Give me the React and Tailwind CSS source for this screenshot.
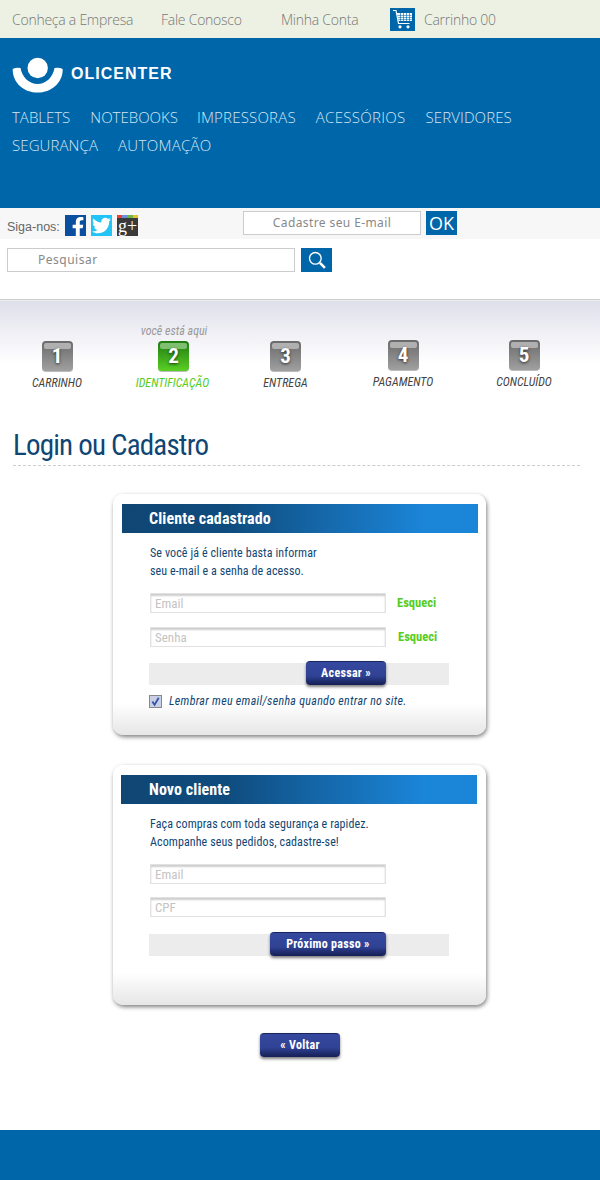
import React from 'react';
import { FaFacebookF, FaTwitter } from 'react-icons/fa';

const cond = "font-['Roboto',sans-serif] [font-stretch:75%]";
const light = "font-['Open_Sans',sans-serif] font-light";

const CartIcon = () => (
    <svg viewBox="0 0 25 23" className="w-[25px] h-[23px]" fill="none">
        <path d="M3 2.5h3l2.5 13h11" stroke="#fff" strokeWidth="1.2" />
        <path d="M6.8 5h15.2v8H8.3z" fill="#fff" />
        <path d="M7.5 7.4h14M8 9.6h14M8.3 11.6h13.5M10.5 5v8M13.5 5v8M16.5 5v8M19.5 5v8" stroke="#0066aa" strokeWidth="0.6" />
        <circle cx="10" cy="18.8" r="1.6" fill="#fff" />
        <circle cx="18" cy="18.8" r="1.6" fill="#fff" />
    </svg>
);

const Logo = () => (
    <svg viewBox="0 0 52 37" className="w-[52px] h-[37px]" fill="#fff">
        <circle cx="25.7" cy="11" r="10.2" />
        <path d="M0.7 12 Q4 10 8.5 11 C10 20 17 27 25.7 27 C34 27 41 20 42.5 11 Q47 10 50.7 12 C51 26 39 35.6 25.7 35.6 C12 35.6 0.5 26 0.7 12 Z" />
    </svg>
);

const Step = ({ n, label, active, here, high }) => (
    <div className={`relative flex flex-col items-center ${high ? '-mt-px' : ''}`}>
        {here && (
            <span className={`absolute -top-[18px] ml-[1px] whitespace-nowrap italic text-[12px] leading-[16px] text-[#999] ${cond}`}>{here}</span>
        )}
        <div className={`relative w-[31px] h-[31px] rounded-[4px] flex items-center justify-center border-b border-[#bbb] ${active ? 'bg-gradient-to-b from-[#1f7a12] to-[#5ad024]' : 'bg-gradient-to-b from-[#6a6a6a] to-[#a0a0a0]'}`}>
            <div className={`absolute top-[2px] left-[2px] right-[2px] h-[6px] rounded-[2px] ${active ? 'bg-[#7fbf70]' : 'bg-[#b0b0b0]'}`}></div>
            <span className={`relative text-white font-bold text-[21px] leading-none [text-shadow:0_1px_3px_rgba(0,0,0,0.7)] ${cond}`}>{n}</span>
        </div>
        <span className={`mt-[3px] italic text-[12px] leading-[16px] whitespace-nowrap ${active ? 'text-[#55cc22] -ml-[2px]' : 'text-[#444]'} ${cond}`}>{label}</span>
    </div>
);

const Field = ({ placeholder }) => (
    <input
        placeholder={placeholder}
        className={`w-[236px] h-[20px] box-border border border-[#e2e2e2] shadow-[inset_0_2px_2px_rgba(0,0,0,0.2)] px-[4px] text-[13px] bg-white outline-none placeholder:text-[#c4c4c4] ${cond}`}
    />
);

const Btn = ({ children, className = '' }) => (
    <button className={`h-[24px] pb-[2px] rounded-[4px] bg-gradient-to-b from-[#35499f] via-[#2f4294] via-60% to-[#161f55] text-white font-bold text-[12px] tracking-[0.3px] shadow-[0_2px_3px_rgba(0,0,0,0.5)] border-t border-[#1a2560] ${cond} ${className}`}>
        {children}
    </button>
);

const CardTitle = ({ children, className = '' }) => (
    <div className={`h-[29px] w-[356px] flex items-center bg-[linear-gradient(to_right,#0f4674_0,#0f4c7e_30%,#1b85d8_85%)] text-white font-bold text-[16px] tracking-[0.1px] ${cond} ${className}`}>
        {children}
    </div>
);

const cardClass = "ml-[113px] w-[373px] rounded-[10px] shadow-[1px_2px_4px_rgba(0,0,0,0.5)] bg-[linear-gradient(to_bottom,#fff_0,#fff_calc(100%-32px),#e6e6e6_100%)] pt-[10px]";
const bodyText = `ml-[1px] text-[#0f4674] text-[12px] leading-[18px] tracking-[0.1px] ${cond}`;

export default function App() {
    return (
        <div className="w-[600px] bg-white">
            {/* barra superior */}
            <div className={`h-[38px] bg-[#ecf1e3] flex items-center text-[14px] tracking-[-0.25px] text-[#777] ${light}`}>
                <span className="ml-[12px] w-[149px] whitespace-nowrap">Conheça a Empresa</span>
                <span className="w-[120px] whitespace-nowrap">Fale Conosco</span>
                <span className="w-[109px] whitespace-nowrap">Minha Conta</span>
                <span className="w-[25px] h-[23px] bg-[#0066aa] mr-[9px]"><CartIcon /></span>
                <span className="whitespace-nowrap">Carrinho 00</span>
            </div>

            {/* header */}
            <div className="h-[170px] bg-[#0066aa] pl-[12px] pt-[19px]">
                <div className="flex items-center gap-[7px]">
                    <Logo />
                    <span className="font-['Liberation_Sans',sans-serif] font-bold text-white text-[16px] tracking-[1px] -mt-[4px]">OLICENTER</span>
                </div>
                <div className={`mt-[9px] flex flex-wrap gap-x-[20px] w-[560px] text-[15px] leading-[28px] text-[#d5e6f3] ${light}`}>
                    <span>TABLETS</span>
                    <span>NOTEBOOKS</span>
                    <span className="-ml-px tracking-[0.2px]">IMPRESSORAS</span>
                    <span className="tracking-[0.3px]">ACESSÓRIOS</span>
                    <span className="tracking-[0.1px]">SERVIDORES</span>
                    <span className="tracking-[0.1px]">SEGURANÇA</span>
                    <span className="tracking-[0.3px]">AUTOMAÇÃO</span>
                </div>
            </div>

            {/* redes e newsletter */}
            <div className="h-[31px] bg-[#f7f7f7] flex items-start pl-[7px]">
                <span className="mt-[11px] font-['Liberation_Sans',sans-serif] text-[12.5px] leading-[16px] text-[#666] w-[58px]">Siga-nos:</span>
                <span className="mt-[7px] w-[21px] h-[21px] bg-[#0a4f9f] text-white flex items-end justify-center text-[20px] overflow-hidden"><FaFacebookF className="translate-x-[2px] translate-y-[1px]" /></span>
                <span className="mt-[7px] ml-[5px] w-[21px] h-[21px] bg-[#22c3f5] text-white flex items-center justify-center text-[19px]"><FaTwitter /></span>
                <span className="mt-[7px] ml-[5px] w-[21px] h-[21px] bg-[#3a3a3a] text-white flex flex-col">
                    <span className="flex h-[3px] shrink-0">
                        <span className="flex-1 bg-[#e8403a]"></span>
                        <span className="flex-1 bg-[#6f8fdc]"></span>
                        <span className="flex-1 bg-[#6cb842]"></span>
                        <span className="flex-1 bg-[#e6c02e]"></span>
                    </span>
                    <span className="font-['Liberation_Serif',serif] text-[18px] leading-[16px] text-center">g+</span>
                </span>
                <input
                    placeholder="Cadastre seu E-mail"
                    className="ml-[105px] mt-[3px] w-[178px] h-[24px] pb-[2px] box-border border border-[#ccc] bg-white text-center text-[12px] tracking-[0.4px] font-['Noto_Sans',sans-serif] outline-none placeholder:text-[#888]"
                />
                <span className="ml-[5px] mt-[3px] w-[31px] h-[24px] bg-[#0066aa] text-white text-[18px] leading-[24px] text-center font-['Open_Sans',sans-serif]">OK</span>
            </div>

            {/* busca */}
            <div className="h-[61px] bg-white pl-[7px] pt-[9px] flex items-start border-b border-[#ccc]">
                <input
                    placeholder="Pesquisar"
                    className="w-[288px] h-[24px] pb-[2px] box-border border border-[#ccc] pl-[30px] text-[12px] tracking-[0.5px] font-['Noto_Sans',sans-serif] outline-none placeholder:text-[#888]"
                />
                <span className="ml-[6px] w-[31px] h-[24px] bg-[#0066aa] flex items-center justify-center">
                    <svg viewBox="0 0 24 24" className="w-[20px] h-[20px]" fill="none" stroke="#fff">
                        <circle cx="10" cy="10" r="7" strokeWidth="1.6" />
                        <path d="M15.5 15.5l6 6" strokeWidth="3" />
                    </svg>
                </span>
            </div>

            {/* etapas */}
            <div className="border-t border-[#eee] h-[108px] pt-[40px] bg-[linear-gradient(to_bottom,#dfdfeb_0,#fff_62px)] grid grid-cols-[114px_119px_105px_130px_112px] items-start">
                <Step n="1" label="CARRINHO" />
                <Step n="2" label="IDENTIFICAÇÃO" active here="você está aqui" />
                <Step n="3" label="ENTREGA" />
                <Step n="4" label="PAGAMENTO" high />
                <Step n="5" label="CONCLUÍDO" high />
            </div>

            {/* titulo */}
            <div className="ml-[13px] w-[567px] mt-[12px] h-[46px] pt-[7px] border-b border-dashed border-[#ccc]">
                <h1 className={`text-[#0f4674] text-[29px] tracking-[-0.8px] leading-[36px] font-normal ${cond}`}>Login ou Cadastro</h1>
            </div>

            {/* cliente cadastrado */}
            <div className={`mt-[28px] h-[241px] ${cardClass}`}>
                <CardTitle className="ml-[9px] pl-[27px]">Cliente cadastrado</CardTitle>
                <div className="pl-[36px] pt-[3px]">
                    <p className={`mt-[8px] ${bodyText}`}>Se você já é cliente basta informar<br />seu e-mail e a senha de acesso.</p>
                    <div className="mt-[13px] pl-[1px] flex items-center gap-[11px]">
                        <Field placeholder="Email" />
                        <span className={`mt-[1px] text-[#55cc22] font-bold text-[12.5px] ${cond}`}>Esqueci</span>
                    </div>
                    <div className="mt-[14px] pl-[1px] flex items-center gap-[12px]">
                        <Field placeholder="Senha" />
                        <span className={`mt-[1px] text-[#55cc22] font-bold text-[12.5px] ${cond}`}>Esqueci</span>
                    </div>
                    <div className="mt-[16px] w-[300px] h-[22px] bg-[#ececec] flex justify-end pr-[63px]">
                        <Btn className="w-[80px] -mt-[2px]">Acessar »</Btn>
                    </div>
                    <div className="mt-[8px] flex items-center gap-[7px]">
                        <span className="w-[13px] h-[13px] border border-[#888] bg-[#c9d0e6] flex items-center justify-center">
                            <svg viewBox="0 0 12 12" className="w-[11px] h-[11px]" fill="none" stroke="#3a55a8" strokeWidth="2">
                                <path d="M2.5 6l2.5 3.5L9.5 2" />
                            </svg>
                        </span>
                        <span className={`italic text-[#0f4674] text-[12px] tracking-[0.3px] leading-[16px] ${cond}`}>Lembrar meu email/senha quando entrar no site.</span>
                    </div>
                </div>
            </div>

            {/* novo cliente */}
            <div className={`mt-[30px] h-[240px] ${cardClass}`}>
                <CardTitle className="ml-[8px] pl-[28px]">Novo cliente</CardTitle>
                <div className="pl-[36px] pt-[3px]">
                    <p className={`mt-[8px] ${bodyText}`}>Faça compras com toda segurança e rapidez.<br />Acompanhe seus pedidos, cadastre-se!</p>
                    <div className="mt-[13px] pl-[1px] flex"><Field placeholder="Email" /></div>
                    <div className="mt-[13px] pl-[1px] flex"><Field placeholder="CPF" /></div>
                    <div className="mt-[17px] w-[300px] h-[22px] bg-[#ececec] flex justify-end pr-[63px]">
                        <Btn className="w-[116px] -mt-[2px]">Próximo passo »</Btn>
                    </div>
                </div>
            </div>

            <div className="flex justify-center">
                <Btn className="mt-[28px] w-[80px]">« Voltar</Btn>
            </div>

            <div className="mt-[73px] h-[50px] bg-[#0066aa]"></div>
        </div>
    );
}
